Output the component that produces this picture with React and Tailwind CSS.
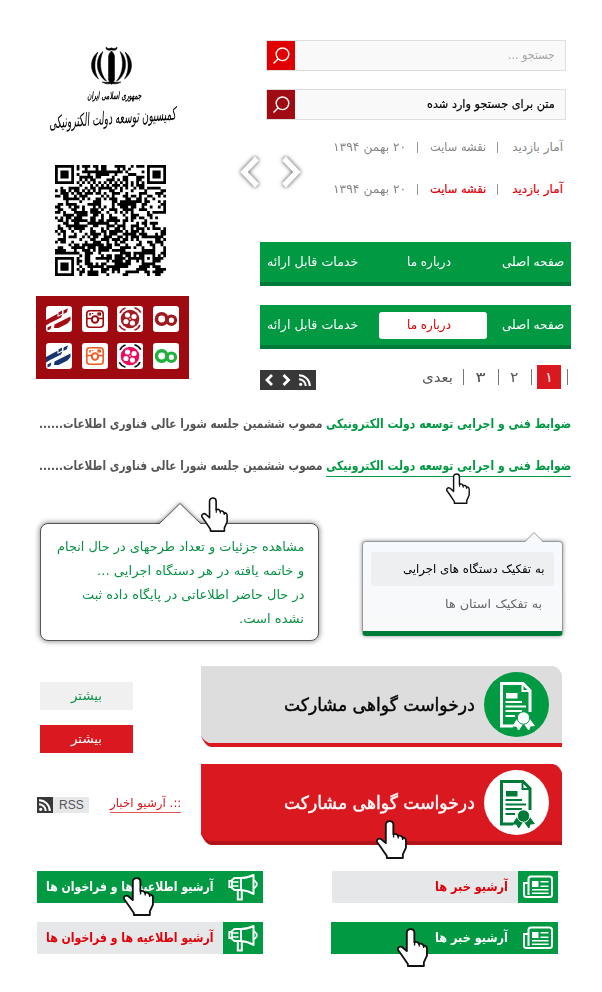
import React, { useLayoutEffect, useRef, useState } from "react";

// Keeps a line of text at a fixed measure by condensing or widening it.
function Fit({ w, className = "", children }) {
  const ref = useRef(null);
  const [s, setS] = useState(1);
  useLayoutEffect(() => {
    if (ref.current && ref.current.offsetWidth) setS(w / ref.current.offsetWidth);
  }, [w]);
  return (
    <span dir="rtl" className={"flex shrink-0 justify-start " + className} style={{ width: w }}>
      <span ref={ref} className="inline-block shrink-0 origin-right whitespace-nowrap" style={{ transform: `scaleX(${s})` }}>
        {children}
      </span>
    </span>
  );
}

function Hand({ className }) {
  return (
    <svg viewBox="0 0 30 38" preserveAspectRatio="none" className={"absolute z-10 " + className}>
      <path
        d="M9.500 22.500V4.500C9.500 0 16.800 0 16.800 4.500V14c2-1.200 4-.2 4.500 1.600c2-1 4 .2 4.300 1.800c2-.5 3.400.8 3.400 2.600v7l-3 6.500v3.500H10.500v-2L5 27l-4-5.500c-.8-2.500 2-4.500 4.500-2.500z"
        fill="#fff" stroke="#111" strokeWidth="1.800" strokeLinejoin="round"
      />
      <path d="M17 13v4M21.500 15.500v2.500M25.800 17.400v2.200" fill="none" stroke="#111" strokeWidth="1.300" />
    </svg>
  );
}

function Emblem() {
  return (
    <svg viewBox="0 0 42 40" className="h-[40px] w-[43px]" fill="#000" stroke="#000" strokeWidth="0.500">
      <path d="M21 5c1.500 1.500 3 3 3 6V34L21 38.500l-3-4.500V11c0-3 1.500-4.500 3-6z" />
      <path d="M15.500 1c1.500 2 4 2 5.500.8c1.500 1.200 4 1.200 5.500-.8c.5 3-2.500 4-5.500 2.900c-3 1.100-6 .1-5.500-2.900z" />
      <path d="M12.500 5.500C5 11 4.500 26 14 34l2 1C9 27 8.500 14 12.500 5.500z" />
      <path d="M29.500 5.500c7.500 5.500 8 20.500-1.500 28.500l-2 1C33 27 33.500 14 29.500 5.500z" />
      <path d="M7.500 6C-1 12.500-1.500 26 8 33C3 25 3.500 14 7.500 6z" />
      <path d="M34.500 6c8.500 6.500 9 20-.5 27C39 25 38.500 14 34.500 6z" />
      <path d="M11.500 36c4 .3 6.500.5 9.500-.8c3 1.300 5.500 1.100 9.500.8c-3 2-7 2.200-9.500 1.500c-2.500.7-6.500.5-9.500-1.500z" />
    </svg>
  );
}

const N = 41;
function finder(r, c, r0, c0) {
  const y = r - r0, x = c - c0;
  if (y < -1 || x < -1 || y > 7 || x > 7) return null;
  if (y < 0 || x < 0 || y > 6 || x > 6) return false;
  const d = Math.max(Math.abs(y - 3), Math.abs(x - 3));
  return d !== 2;
}
function qrPath() {
  let d = "";
  let seed = 7919;
  for (let r = 0; r < N; r++)
    for (let c = 0; c < N; c++) {
      seed = (seed * 1103515245 + 12345) % 2147483648;
      let on = (seed >> 16) % 100 < 49;
      for (const [a, b] of [[0, 0], [0, N - 7], [N - 7, 0]]) {
        const f = finder(r, c, a, b);
        if (f !== null) on = f;
      }
      const m = Math.max(Math.abs(r - 34), Math.abs(c - 34));
      if (m <= 2) on = m !== 1;
      if (r === 6 && c > 7 && c < N - 8) on = c % 2 === 0;
      if (c === 6 && r > 7 && r < N - 8) on = r % 2 === 0;
      if (on) d += `M${c} ${r}h1.030v1.030h-1.030z`;
    }
  return d;
}

function Namaa({ c }) {
  return (
    <svg viewBox="0 0 26 26" className="h-[26px] w-[26px]" fill={c}>
      <path d="M0 14L11.500 7.800V11L16.500 8.500L15 11.500L4 17L0 19.500z" />
      <path d="M8.500 18.500L24.500 10.500v3.500L21.500 17.500l-9 4.500H8z" />
      <path d="M12.500 6.500l3.500-2v3l-3.500 2zM17.500 4.500l4.500-2.300l-1.200 4L17.500 8zM1.500 21.500l4-2L4.500 23L1.500 24.500z" />
    </svg>
  );
}
function Insta({ c }) {
  return (
    <svg viewBox="0 0 26 26" className="h-[26px] w-[26px]" fill="none" stroke={c} strokeWidth="1.600">
      <rect x="4.800" y="4.800" width="16.400" height="16.400" rx="3" />
      <path d="M5 12.500h4.500M16.500 12.500H21" />
      <circle cx="13" cy="13.500" r="3.200" strokeWidth="2" />
      <rect x="16.200" y="7.200" width="2" height="1.600" fill={c} />
      <path d="M8 7v2.500M10.500 7v1" strokeWidth="1.600" />
    </svg>
  );
}
function Aparat({ c, k }) {
  return (
    <svg viewBox="0 0 26 26" className="h-[26px] w-[26px]">
      <circle cx="13" cy="13" r="9.300" fill={c} />
      <g fill="#fff">
        <circle cx="10.500" cy="9" r="2.600" /><circle cx="17" cy="10.500" r="2.600" />
        <circle cx="9" cy="15.500" r="2.600" /><circle cx="15.500" cy="17" r="2.600" /><circle cx="13" cy="13" r="0.800" />
      </g>
      <g fill="none" stroke={k} strokeWidth="1.700">
        <path d="M3 7Q4.800 3 8.500 2M17.500 1.800Q21.800 3 23.800 6.700M23 19Q21.500 22.800 17.500 24M8.500 24.200Q4.200 22.900 2.200 19.300" />
      </g>
    </svg>
  );
}
function Cloob({ c }) {
  return (
    <svg viewBox="0 0 26 26" className="h-[26px] w-[26px]" fill="none" stroke={c} strokeWidth="3.500">
      <circle cx="8.700" cy="13" r="5.200" />
      <circle cx="18.400" cy="14.200" r="4.200" strokeWidth="3.200" />
    </svg>
  );
}
const Tile = ({ children }) => <div className="h-[26px] w-[26px] overflow-hidden rounded-[3px] bg-white">{children}</div>;

function SearchBox({ color, children }) {
  return (
    <div className="flex h-[31px] w-[300px] items-center justify-between border border-[#dedede] bg-[#f9f9f9] pr-[10px]">
      <div className={"flex h-[29px] w-[28px] items-center justify-center " + color}>
        <svg viewBox="0 0 18 18" className="h-[18px] w-[18px]" fill="none" stroke="#fff" strokeWidth="1.400">
          <circle cx="10.500" cy="7.300" r="6.300" />
          <path d="M6.300 11.700L1.500 16.500" />
        </svg>
      </div>
      {children}
    </div>
  );
}

function Stats({ color }) {
  return (
    <div dir="rtl" className="flex h-[20px] items-center text-[12px] leading-[20px] text-[#858585]">
      <Fit w={51} className={color}>آمار بازدید</Fit>
      <span className="mr-[14px] h-[11px] w-px bg-[#999]" />
      <Fit w={56} className={"mr-[11px] " + color}>نقشه سایت</Fit>
      <span className="mr-[12px] h-[11px] w-px bg-[#999]" />
      <Fit w={73} className="mr-[11px]">۲۰ بهمن ۱۳۹۴</Fit>
    </div>
  );
}

const Chevron = ({ d }) => (
  <svg viewBox="0 0 24 36" className="h-[36px] w-[24px] drop-shadow-[0_0_2px_rgba(0,0,0,0.75)]" fill="none" stroke="#fff" strokeWidth="5.500">
    <path d={d} />
  </svg>
);

function Menu({ active }) {
  return (
    <div dir="rtl" className="flex h-[44px] w-[311px] items-center border-b-4 border-[#007a38] bg-[#029943] pr-[7px] text-[12.500px] leading-[20px] text-white">
      <Fit w={62}>صفحه اصلی</Fit>
      <div className={"mr-[15px] flex h-[27px] w-[108px] items-center rounded-[3px] pr-[36px] " + (active ? "bg-white text-[#e00000]" : "")}>
        <Fit w={44}>درباره ما</Fit>
      </div>
      <Fit w={91} className="mr-[21px]">خدمات قابل ارائه</Fit>
    </div>
  );
}

const Rss = ({ className }) => (
  <svg viewBox="0 0 12 12" className={className} fill="none" stroke="#fff" strokeWidth="2">
    <path d="M0 1.200A10.800 10.800 0 0 1 10.800 12M0 5.300A6.700 6.700 0 0 1 6.700 12" />
    <circle cx="1.700" cy="10.300" r="1.600" fill="#fff" stroke="none" />
  </svg>
);

const Bar = ({ className = "" }) => <span className={"h-[16px] w-px bg-[#777] " + className} />;

function Rule({ hover }) {
  return (
    <div dir="rtl" className="relative flex h-[22px] gap-[3px] text-[13px] leading-[22px] font-bold">
      <div className={"h-[22px] border-b text-[#029943] " + (hover ? "border-[#029943]" : "border-transparent")}>
        <Fit w={245}>ضوابط فنی و اجرایی توسعه دولت الکترونیکی</Fit>
      </div>
      <Fit w={284} className="text-[#555]">مصوب ششمین جلسه شورا عالی فناوری اطلاعات......</Fit>
      {hover && <Hand className="right-[101px] top-[18px] h-[31px] w-[24px]" />}
    </div>
  );
}

function Certificate({ c, bg }) {
  return (
    <svg viewBox="0 0 36 50" className="h-[50px] w-[36px]" fill="none" stroke={c} strokeWidth="3">
      <path d="M14 46H2.500V3.500H24L31 10.500V32" />
      <path d="M23.500 3.500V11H31" strokeWidth="2" />
      <path d="M7 13h11.500v5.500H7z" fill={c} stroke="none" />
      <path d="M6.500 22H23M6.500 26.500H27M6.500 31H23M6.500 36h9.500" strokeWidth="1.900" />
      <path d="M18 39l-5 7.500l4.500.2l2 4.300l5-7.500l5.500 7.500l1.500-4.500l4.500-.5L31 39z" fill={c} stroke="none" />
      <circle cx="24.500" cy="38" r="6.200" fill={c} stroke={bg} strokeWidth="1" />
    </svg>
  );
}

function Request({ hover }) {
  return (
    <div className="relative h-[81px] w-[361px]">
      <svg viewBox="0 0 361 81" className="absolute inset-0 h-[81px] w-[361px]">
        <path d="M0 70Q4 80 10 81H361V70z" fill={hover ? "#b31217" : "#d9181f"} />
        <path d="M0 0H352Q359 2 361 9V77H8Q3 75 0 70z" fill={hover ? "#d9181f" : "#dddddd"} />
      </svg>
      <div dir="rtl" className="relative flex h-[77px] items-center pr-[13px]">
        <div className={"flex h-[65px] w-[65px] items-center justify-center rounded-full " + (hover ? "bg-white" : "bg-[#029943]")}>
          <Certificate c={hover ? "#007a38" : "#fff"} bg={hover ? "#fff" : "#029943"} />
        </div>
        <Fit w={191} className={"mr-[9px] text-[18px] leading-[28px] [-webkit-text-stroke:0.400px] " + (hover ? "text-white" : "text-black")}>
          درخواست گواهی مشارکت
        </Fit>
      </div>
      {hover && <Hand className="left-[175px] top-[56px] h-[39px] w-[31px]" />}
    </div>
  );
}

const Megaphone = () => (
  <svg viewBox="0 0 30 28" className="h-[28px] w-[30px]" fill="none" stroke="#fff" strokeWidth="2">
    <path d="M13 5Q20 5 25.500 2V21Q20 17.500 13 17z" strokeLinejoin="round" />
    <path d="M13 5H6.500L4 7v8L6.500 17H13M4 8H1.300v6H4" strokeWidth="1.800" />
    <path d="M4.500 9h6M4.500 13h6" strokeWidth="1.500" />
    <path d="M9.800 17v9.500h4V17" />
    <path d="M26 7l2.700 3v2.500L26 15.500" strokeWidth="1.800" />
  </svg>
);
const News = () => (
  <svg viewBox="0 0 30 24" className="h-[24px] w-[30px]" fill="none" stroke="#fff" strokeWidth="2">
    <path d="M5.500 20V4Q5.500 1.500 8 1.500H26.500Q29 1.500 29 4V19.500Q29 22 26.500 22H3.500Q1 22 1 19.500V8H5" />
    <path d="M9 6h6.500v6H9z" fill="#fff" stroke="none" />
    <path d="M17.500 6.800h8M17.500 11.200h8M9 14.800h16.500M9 18.200h16.500" strokeWidth="1.500" />
  </svg>
);

function Archive({ w, hover, icon, pad, tw, hand, children }) {
  return (
    <div dir="rtl" className={"relative flex h-[32px] " + w + (hover ? " bg-[#029943] text-white" : " bg-[#e6e7e9] text-[#e0000a]")}>
      <div className="flex h-full w-[40px] items-center justify-center bg-[#029943]">{icon}</div>
      <Fit w={tw} className={"text-[13px] leading-[32px] font-bold " + pad}>{children}</Fit>
      {hover && <Hand className={"h-[39px] w-[31px] " + hand} />}
    </div>
  );
}

export default function App() {
  return (
    <div className="h-[992px] w-[602px] overflow-hidden bg-white font-['DejaVu_Sans','Noto_Sans',sans-serif]">
      <div className="flex h-[412px]">
        <div className="w-[236px] shrink-0 pt-[46px]">
          <div className="flex h-[119px] w-[222px] flex-col items-center">
            <Emblem />
            <Fit w={54} className="mt-[3px] ml-[6px] text-[10px] leading-[14px] font-bold italic">جمهوری اسلامی ایران</Fit>
            <div className="-mt-[2px] ml-[2px] h-[34px] -rotate-4 italic">
              <Fit w={127} className="text-[18px] leading-[34px] text-black">کمیسیون توسعه دولت الکترونیکی</Fit>
            </div>
          </div>
          <svg viewBox="0 0 41 41" className="ml-[55px] h-[111px] w-[111px]"><path d={qrPath()} /></svg>
          <div className="mt-[20px] ml-[36px] grid h-[83px] w-[153px] grid-cols-4 content-start gap-x-[9.700px] gap-y-[11px] bg-[#9f0a10] pt-[10px] pr-[10px] pl-[10px]">
            <Tile><Namaa c="#a50d14" /></Tile>
            <Tile><Insta c="#9f0a10" /></Tile>
            <Tile><Aparat c="#a51c22" k="#a51c22" /></Tile>
            <Tile><Cloob c="#9f1a1f" /></Tile>
            <Tile><Namaa c="#17356e" /></Tile>
            <Tile><Insta c="#f4591f" /></Tile>
            <Tile><Aparat c="#ec0b5d" k="#111" /></Tile>
            <Tile><Cloob c="#22b03c" /></Tile>
          </div>
        </div>
        <div className="w-[366px] pt-[40px]">
          <div className="ml-[30px] flex flex-col gap-[18px]">
            <SearchBox color="bg-[#e00000]">
              <Fit w={47} className="mb-[2px] text-[12px] leading-[20px] text-[#a5a5a5]">جستجو ...</Fit>
            </SearchBox>
            <SearchBox color="bg-[#a00a12]">
              <Fit w={128} className="mb-[2px] text-[12px] leading-[20px] text-black [-webkit-text-stroke:0.200px]">متن برای جستجو وارد شده</Fit>
            </SearchBox>
          </div>
          <div className="mt-[17px] flex h-[62px] justify-between pr-[39px]">
            <div className="mt-[17px] ml-[2px] flex gap-[17px]">
              <Chevron d="M19 4.500L6 18L19 31.500" />
              <Chevron d="M5 4.500L18 18L5 31.500" />
            </div>
            <div className="flex flex-col gap-[22px]">
              <Stats color="text-[#858585]" />
              <Stats color="text-[#e0000a] [-webkit-text-stroke:0.200px]" />
            </div>
          </div>
          <div className="mt-[43px] ml-[24px] flex flex-col gap-[19px]">
            <Menu />
            <Menu active />
          </div>
          <div className="mt-[16px] flex justify-between pr-[34px] pl-[24px]">
            <div className="mt-[5px] flex h-[20px] w-[56px] items-center bg-[#383838] pl-[4px]">
              <svg viewBox="0 0 30 12" className="h-[12px] w-[30px]" fill="none" stroke="#fff" strokeWidth="2.800">
                <path d="M8 1L3 6l5 5M19.500 1l5 5l-5 5" />
              </svg>
              <Rss className="ml-[5px] h-[12px] w-[12px]" />
            </div>
            <div dir="rtl" className="flex h-[24px] items-center text-[14px] leading-[24px] text-[#555]">
              <Bar />
              <span className="mr-[6px] h-[24px] w-[24px] bg-[#d9181f] text-center text-white">۱</span>
              <Bar className="mr-[5px]" />
              <Fit w={9} className="mr-[12px]">۲</Fit>
              <Bar className="mr-[11px]" />
              <Fit w={11} className="mr-[12px]">۳</Fit>
              <Bar className="mr-[11px]" />
              <Fit w={31} className="mr-[10px]">بعدی</Fit>
            </div>
          </div>
        </div>
      </div>

      <div className="flex h-[86px] flex-col gap-[20px] pt-[1px] pr-[31px]">
        <Rule />
        <Rule hover />
      </div>

      <div className="flex h-[168px] pl-[40px]">
        <div className="relative mt-[25px] h-[118px] w-[279px] rounded-[8px] border border-[#555] bg-white pt-[11px] pr-[14px] text-[12.500px] leading-[24px] text-[#0a9145] shadow-[0_0_5px_1px_rgba(0,0,0,0.4)]">
          <svg viewBox="0 0 50 25" className="absolute -top-[25px] left-[114px] h-[25px] w-[50px]">
            <path d="M3 26L25 4.500L47 26V34H3z" fill="#fff" stroke="#555" className="drop-shadow-[0_0_2px_rgba(0,0,0,0.5)]" />
          </svg>
          <span className="absolute -top-px left-[119px] h-[2px] w-[40px] bg-white" />
          <div dir="rtl" className="relative flex flex-col items-start">
            <Fit w={248}>مشاهده جزئیات و تعداد طرحهای در حال انجام</Fit>
            <Fit w={207}>و خاتمه یافته در هر دستگاه اجرایی ...</Fit>
            <Fit w={222}>در حال حاضر اطلاعاتی در پایگاه داده ثبت</Fit>
            <Fit w={65}>نشده است.</Fit>
          </div>
          <Hand className="-top-[27px] left-[160px] h-[35px] w-[27px]" />
        </div>
        <div dir="rtl" className="relative mt-[43px] ml-[43px] h-[95px] w-[201px] rounded-[4px] border border-b-[5px] border-[#999] border-b-[#007a38] bg-linear-to-b from-[#f5faff] to-[#f9f9f9] px-[8px] pt-[10px] text-[12px] shadow-[0_0_4px_rgba(0,0,0,0.45)]">
          <svg viewBox="0 0 24 13" className="absolute -top-[11px] right-[16px] h-[13px] w-[24px]">
            <path d="M3 11L12 2l9 9v2H3z" fill="#f6faff" />
            <path d="M3 10.500L12 1.500l9 9" fill="none" stroke="#999" />
          </svg>
          <div className="flex h-[34px] items-center rounded-[3px] bg-[#eeeff1] pr-[10px] leading-[24px] text-black">
            <Fit w={141}>به تفکیک دستگاه های اجرایی</Fit>
          </div>
          <div className="mt-px flex h-[34px] items-center pr-[12px] leading-[24px] text-[#666]">
            <Fit w={97}>به تفکیک استان ها</Fit>
          </div>
        </div>
      </div>

      <div className="flex h-[205px]">
        <div className="w-[201px] pt-[16px]">
          <div className="ml-[40px] flex flex-col gap-[15px] text-[12.500px]">
            <div className="flex h-[28px] w-[93px] items-center justify-center bg-[#f0f0f0] text-[#0a9145]"><Fit w={31}>بیشتر</Fit></div>
            <div className="flex h-[28px] w-[93px] items-center justify-center bg-[#d9181f] text-white"><Fit w={31}>بیشتر</Fit></div>
          </div>
          <div className="mt-[41px] ml-[37px] flex h-[22px] items-start">
            <div className="mt-[3px] flex h-[16px] w-[52px] bg-[#e6e7e9]">
              <div className="flex h-[16px] w-[16px] items-center justify-center bg-[#383838]"><Rss className="h-[12px] w-[12px]" /></div>
              <span className="ml-[6px] font-['Liberation_Sans',sans-serif] text-[12px] leading-[17px] text-[#555]">RSS</span>
            </div>
            <div className="ml-[21px] h-[19px] border-b border-[#e0555a] text-[12px] leading-[18px] text-[#d9181f]">
              <Fit w={71}>::. آرشیو اخبار</Fit>
            </div>
          </div>
        </div>
        <div className="flex flex-col gap-[17px]">
          <Request />
          <Request hover />
        </div>
      </div>

      <div className="flex justify-between pr-[44px] pl-[37px]">
        <div className="flex flex-col gap-[19px]">
          <Archive w="w-[226px]" hover icon={<Megaphone />} tw={167} pad="mr-[10px]" hand="left-[86px] top-[6px]">آرشیو اطلاعیه ها و فراخوان ها</Archive>
          <Archive w="w-[226px]" icon={<Megaphone />} tw={167} pad="mr-[10px]">آرشیو اطلاعیه ها و فراخوان ها</Archive>
        </div>
        <div dir="rtl" className="flex flex-col gap-[19px]">
          <Archive w="w-[226px]" icon={<News />} tw={73} pad="mr-[10px]">آرشیو خبر ها</Archive>
          <Archive w="w-[227px]" hover icon={<News />} tw={73} pad="mr-[10px]" hand="left-[66px] top-[6px]">آرشیو خبر ها</Archive>
        </div>
      </div>
    </div>
  );
}
